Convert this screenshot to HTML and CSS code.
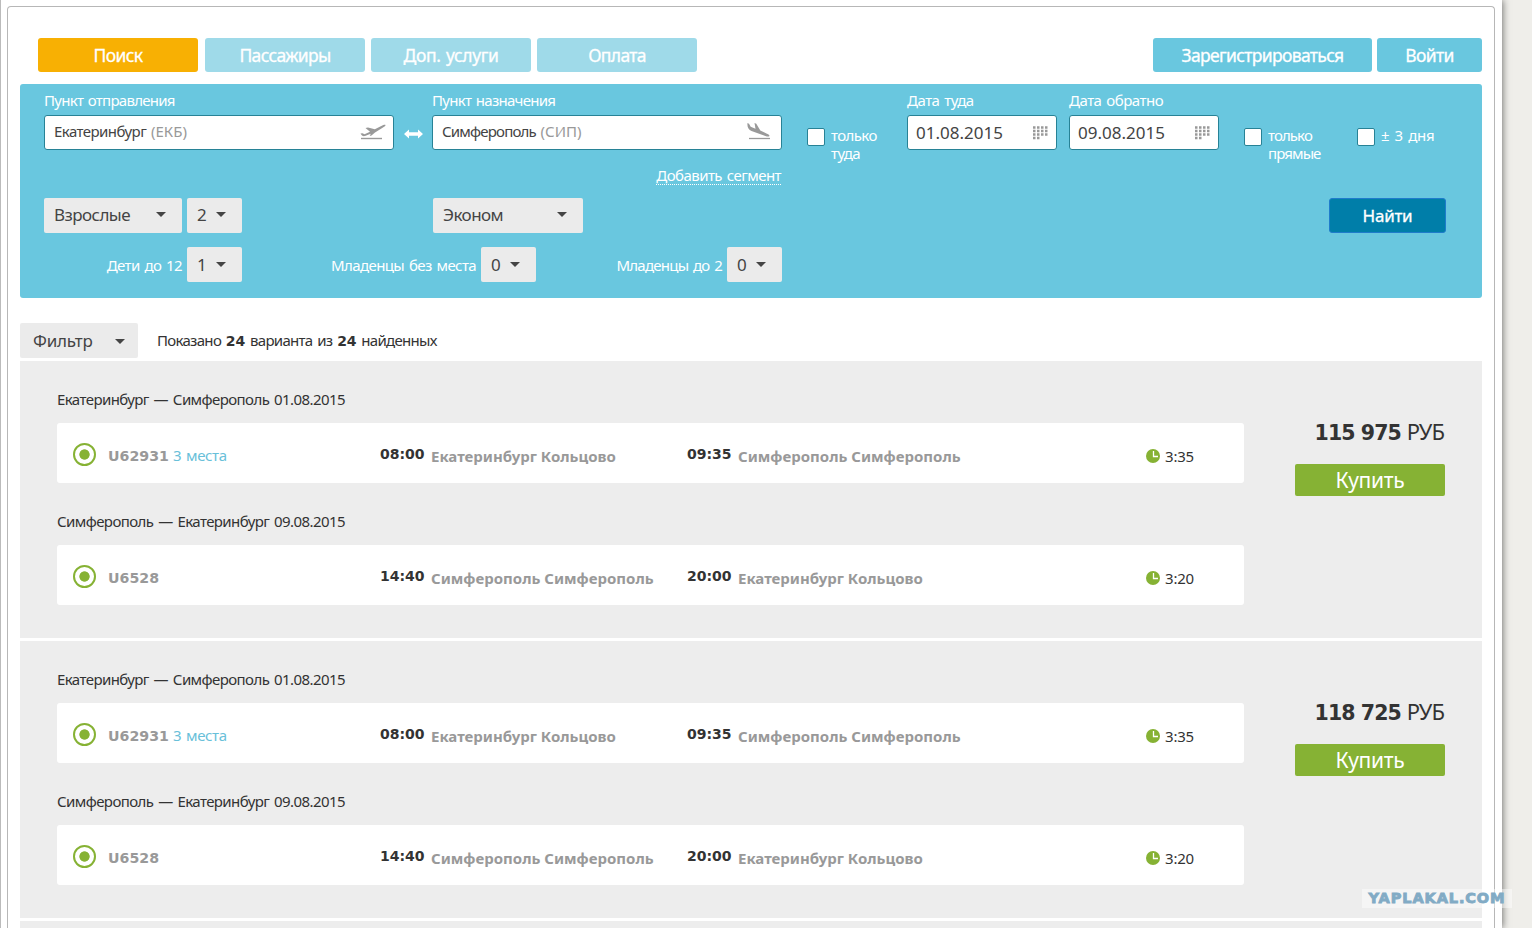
FILE: index.html
```html
<!DOCTYPE html>
<html lang="ru">
<head>
<meta charset="utf-8">
<title>Поиск</title>
<link rel="stylesheet" href="styles.css">
</head>
<body>
<div class="page"><div class="frame">
  <nav class="tabs">
    <a class="tab active">Поиск</a>
    <a class="tab">Пассажиры</a>
    <a class="tab extras">Доп. услуги</a>
    <a class="tab">Оплата</a>
    <a class="tab auth register">Зарегистрироваться</a>
    <a class="tab auth login">Войти</a>
  </nav>
  <form class="search">
    <div class="row route">
      <div class="field city-field"><label>Пункт отправления</label>
        <div class="input"><span>Екатеринбург <i>(ЕКБ)</i></span>
          <svg class="plane" width="26" height="17" viewBox="0 0 26 17"><path d="M1 14.500h21" stroke="#999" stroke-width="1.400"/><path d="M.5 9.500l2-.3 2 1.100 5.500-2.600L5.500 4l2.500-.6 6.800 1.900 6.500-3.300c2-1 3.800-1.500 4.200-.9.300.7-1 1.700-2.500 2.500L15 8.500l-3.500 3-1.800.4 1.100-2.200-5.800 2.300C3 12.500 1.500 11.500.5 9.500z" fill="#999"/></svg></div></div>
      <svg class="swap" width="19" height="10" viewBox="0 0 19 10"><path d="M0 5l5-4.500v2.800h9V.5L19 5l-5 4.500V6.700H5v2.800z" fill="#fff"/></svg>
      <div class="field city-field"><label>Пункт назначения</label>
        <div class="input"><span class="sip">Симферополь <i>(СИП)</i></span>
          <svg class="plane land" width="24" height="18" viewBox="0 0 24 18"><path d="M2 16.500h21" stroke="#999" stroke-width="1.300"/><path d="M.5 1l1.500.8 1.700 3 4.800 2L7.500 1l1.800.8 4 6.700 6.700 3.300c2 .9 2.700 1.700 2.300 2.400-.4.600-2 .5-4-.2L4.500 9C1.500 7.500 0 5 .5 1z" fill="#999"/></svg></div></div>
      <div class="check oneway"><b class="box"></b><span>только<br>туда</span></div>
      <div class="field date-field"><label>Дата туда</label>
        <div class="input big"><span>01.08.2015</span><svg class="cal" width="15" height="14"><path d="M0 1.500h15M0 5h15M0 8.500h15M0 12h7" stroke="#999" stroke-width="2.500" stroke-dasharray="2.500 1.500"/></svg></div></div>
      <div class="field date-field back"><label>Дата обратно</label>
        <div class="input big"><span>09.08.2015</span><svg class="cal" width="15" height="14"><path d="M0 1.500h15M0 5h15M0 8.500h15M0 12h7" stroke="#999" stroke-width="2.500" stroke-dasharray="2.500 1.500"/></svg></div></div>
      <div class="check direct"><b class="box"></b><span>только<br>прямые</span></div>
      <div class="check days"><b class="box"></b><span>± 3 дня</span></div>
    </div>
    <div class="segment"><a>Добавить сегмент</a></div>
    <div class="row people">
      <div class="select kind">Взрослые</div>
      <div class="select count">2</div>
      <div class="select class">Эконом</div>
      <button class="find" type="button">Найти</button>
    </div>
    <div class="row children">
      <span class="who kids">Дети до 12</span><div class="select count">1</div>
      <span class="who lap">Младенцы без места</span><div class="select count">0</div>
      <span class="who infants">Младенцы до 2</span><div class="select count">0</div>
    </div>
  </form>
  <div class="filter"><div class="select">Фильтр</div><p>Показано <b>24</b> варианта из <b>24</b> найденных</p></div>
  <section class="offer">
    <div class="flights">
      <h3>Екатеринбург — Симферополь 01.08.2015</h3>
      <div class="flight"><b class="radio"></b><span class="num"><b>U62931</b> <em>3 места</em></span><b class="time">08:00</b><b class="city from">Екатеринбург Кольцово</b><b class="time">09:35</b><b class="city to">Симферополь Симферополь</b><svg class="clock" width="14" height="14"><circle cx="7" cy="7" r="7" fill="#86b234"/><path d="M7.500 2v5.500H12" fill="none" stroke="#fff" stroke-width="1.300"/></svg><span class="dur">3:35</span></div>
      <h3>Симферополь — Екатеринбург 09.08.2015</h3>
      <div class="flight"><b class="radio"></b><span class="num"><b>U6528</b></span><b class="time">14:40</b><b class="city from">Симферополь Симферополь</b><b class="time">20:00</b><b class="city to">Екатеринбург Кольцово</b><svg class="clock" width="14" height="14"><circle cx="7" cy="7" r="7" fill="#86b234"/><path d="M7.500 2v5.500H12" fill="none" stroke="#fff" stroke-width="1.300"/></svg><span class="dur">3:20</span></div>
    </div>
    <div class="buy"><div class="price"><b>115 975</b> <span>РУБ</span></div><a>Купить</a></div>
  </section>
  <section class="offer">
    <div class="flights">
      <h3>Екатеринбург — Симферополь 01.08.2015</h3>
      <div class="flight"><b class="radio"></b><span class="num"><b>U62931</b> <em>3 места</em></span><b class="time">08:00</b><b class="city from">Екатеринбург Кольцово</b><b class="time">09:35</b><b class="city to">Симферополь Симферополь</b><svg class="clock" width="14" height="14"><circle cx="7" cy="7" r="7" fill="#86b234"/><path d="M7.500 2v5.500H12" fill="none" stroke="#fff" stroke-width="1.300"/></svg><span class="dur">3:35</span></div>
      <h3>Симферополь — Екатеринбург 09.08.2015</h3>
      <div class="flight"><b class="radio"></b><span class="num"><b>U6528</b></span><b class="time">14:40</b><b class="city from">Симферополь Симферополь</b><b class="time">20:00</b><b class="city to">Екатеринбург Кольцово</b><svg class="clock" width="14" height="14"><circle cx="7" cy="7" r="7" fill="#86b234"/><path d="M7.500 2v5.500H12" fill="none" stroke="#fff" stroke-width="1.300"/></svg><span class="dur">3:20</span></div>
    </div>
    <div class="buy"><div class="price"><b>118 725</b> <span>РУБ</span></div><a>Купить</a></div>
  </section>
  <div class="next-offer"></div>
</div></div>
<div class="watermark">YAPLAKAL.COM</div>
</body>
</html>
```
FILE: styles.css
```css
* { box-sizing: border-box; }
body { margin: 0; height: 928px; overflow: hidden; background: #efeeea; color: #333; font: 15px/18px "Noto Sans", sans-serif; letter-spacing: -.55px; word-spacing: 1.5px; }
b { font-family: "DejaVu Sans", sans-serif; font-size: 14px; letter-spacing: 0; }
i, em { font-style: normal; }
svg { flex: none; display: block; }
.page { width: 1502px; height: 928px; padding: 6px 7px 0; background: #fff; border-left: 1px solid #bbb; box-shadow: 1px 0 7px rgba(0,0,0,.5); }
.frame { margin-left: -1px; width: 1488px; height: 922px; padding: 31px 12px 0; border: 1px solid #b7b7b7; border-bottom: 0; border-radius: 4px 4px 0 0; }
.tabs { display: flex; height: 34px; gap: 6px; padding-left: 18px; }
.tab { width: 160px; border-radius: 3px; background: #9fdae9; color: #fff; font-size: 17.5px; line-height: 35px; letter-spacing: -.65px; text-align: center; -webkit-text-stroke: .3px #fff; }
.active { background: #f8b003; margin-right: 1px; }
.extras { letter-spacing: -.4px; }
.auth { background: #69c7df; }
.register { width: 219px; margin-left: auto; margin-right: -1px; }
.login { width: 105px; }
.search { margin: 12px 0 0; height: 214px; padding: 7px 24px 0; background: #69c7df; border-radius: 3px; color: #fff; }
.row { display: flex; }
.field label { display: block; height: 24px; letter-spacing: -.73px; }
.city-field { width: 350px; }
.date-field { width: 150px; margin-left: 30px; }
.date-field label { letter-spacing: -.5px; }
.back { margin-left: 12px; }
.input { display: flex; align-items: center; justify-content: space-between; height: 35px; padding: 0 7px 3px 9px; background: #fff; border: 1px solid #278296; border-radius: 3px; color: #444; letter-spacing: -.55px; }
.sip { letter-spacing: -.8px; }
.input i { color: #999; letter-spacing: 0; }
.big { font-size: 17px; padding: 0 8px 0 8px; letter-spacing: 0; }
.plane { margin-top: 2px; }
.land { margin: 0 3px 0 0; }
.swap { margin: 38px 9px 0 10px; }
.check { display: flex; gap: 6px; padding-top: 35px; letter-spacing: -.6px; }
.box { flex: none; width: 18px; height: 18px; margin-top: 2px; background: #fff; border: 1px solid #278296; border-radius: 2px; }
.oneway { margin-left: 25px; width: 70px; white-space: nowrap; }
.direct { margin-left: 25px; width: 88px; letter-spacing: -.9px; }
.days { margin-left: 25px; letter-spacing: -.2px; }
.segment { width: 737px; margin-top: 4px; text-align: right; }
.segment a { display: inline-block; height: 19px; border-bottom: 1px dotted #fff; }
.people { margin-top: 13px; }
.select { position: relative; height: 35px; padding-left: 10px; background: #ebebeb; border-radius: 2px; color: #444; font-size: 17px; line-height: 34px; }
.select::after { content: ""; position: absolute; right: 16px; top: 14px; border: 5px solid transparent; border-top-color: #444; border-bottom: 0; }
.kind { width: 138px; }
.count { width: 55px; margin-left: 5px; }
.class { width: 150px; margin-left: 191px; }
.find { width: 117px; height: 35px; margin-left: 746px; padding: 0; border: 1px solid #1f7ccb; border-radius: 3px; background: #007ea9; color: #fff; font: 17px/32px "Noto Sans", sans-serif; letter-spacing: -.25px; -webkit-text-stroke: .3px #fff; margin-right: -1px; }
.children { margin-top: 14px; line-height: 36px; }
.children .select { line-height: 35px; }
.children .select::after { top: 15px; }
.who { text-align: right; letter-spacing: -.6px; }
.kids { width: 138px; }
.lap { width: 234px; }
.infants { width: 186px; letter-spacing: -.75px; }
.filter { display: flex; margin-top: 25px; height: 38px; }
.filter .select { width: 118px; padding-left: 13px; line-height: 35px; letter-spacing: -.2px; }
.filter .select::after { right: 13px; top: 16px; }
.filter p { margin: 8px 0 0 19px; letter-spacing: -.7px; }
.offer { display: flex; justify-content: space-between; height: 277px; margin-bottom: 3px; padding: 29px 37px 0; background: #ededed; }
.next-offer { height: 7px; background: #ededed; }
.flights { width: 1187px; }
h3 { margin: 0 0 15px; height: 18px; font-weight: 400; font-size: 15px; letter-spacing: -.58px; }
.flight { display: flex; align-items: center; height: 60px; margin-bottom: 29px; padding: 0 0 0 16px; border-radius: 3px; background: #fff; }
.radio { width: 23px; height: 23px; margin: 2px 12px 0 0; border: 2px solid #86b234; border-radius: 50%; background: radial-gradient(circle, #86b234 4.800px, transparent 5.500px); }
.num { width: 272px; padding-top: 5px; color: #999; letter-spacing: -.4px; }
.num b { font-size: 14.200px; }
.num em { color: #69c0d9; margin-left: -1px; }
.time { width: 51px; padding-top: 2px; }
.city { padding-top: 6px; color: #999; font: 700 15px/18px "Noto Sans", sans-serif; letter-spacing: 0; word-spacing: 0; padding-top: 6px; }
.from { width: 256px; }
.to { width: 408px; }
.clock { margin: 5px 5px 0 0; }
.dur { padding-top: 5px; letter-spacing: -.2px; }
.buy { width: 150px; padding-top: 27px; }
.price { height: 47px; font-size: 22px; line-height: 28px; text-align: right; white-space: nowrap; word-spacing: 0; letter-spacing: -.9px; padding-right: 1px; }
.price b { font: 700 20.500px/28px "DejaVu Sans", sans-serif; letter-spacing: -.9px; margin-right: 1px; }
.buy a { display: block; height: 32px; border-radius: 2px; background: #86b234; color: #fff; font-size: 21px; line-height: 33px; text-align: center; letter-spacing: -.3px; }
.watermark { position: absolute; left: 1362px; top: 889px; width: 150px; height: 19px; background: rgba(255,255,255,.45); color: #82abc5; font: 700 14.500px/19px "DejaVu Sans", sans-serif; letter-spacing: .9px; text-align: center; -webkit-text-stroke: .9px #82abc5; }
```
